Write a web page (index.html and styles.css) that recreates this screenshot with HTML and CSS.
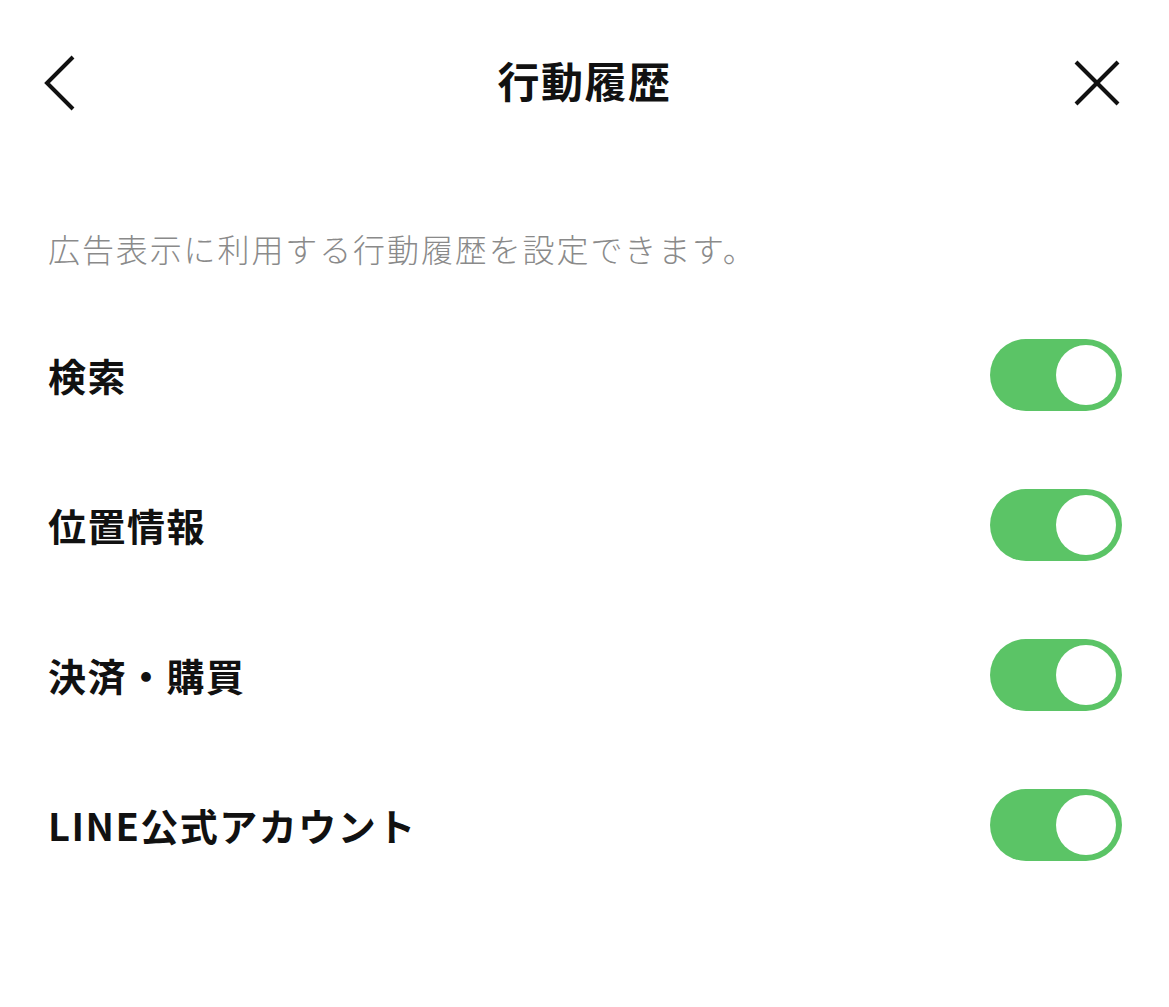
FILE: index.html
```html
<!DOCTYPE html>
<html lang="ja">
<head>
  <meta charset="UTF-8">
  <title>行動履歴</title>
  <link rel="stylesheet" href="styles.css">
</head>
<body>

<div class="screen">
  <div class="header">
    <div class="header-left">
      <svg class="icon-back" width="32" height="56" viewBox="0 0 32 56">
        <polyline points="29,2 3,28 29,54" fill="none" stroke="#111" stroke-width="4" stroke-linecap="butt"/>
      </svg>
    </div>
    <h1 class="title">行動履歴</h1>
    <div class="header-right">
      <svg class="icon-close" width="46" height="46" viewBox="0 0 46 46">
        <line x1="2" y1="2" x2="44" y2="44" stroke="#111" stroke-width="4"/>
        <line x1="44" y1="2" x2="2" y2="44" stroke="#111" stroke-width="4"/>
      </svg>
    </div>
  </div>

  <p class="description">広告表示に利用する行動履歴を設定できます。</p>

  <!-- 設定リスト -->
  <div class="settings">
    <div class="row">
      <span class="label">検索</span>
      <div class="toggle on"><div class="knob"></div></div>
    </div>
    <div class="row">
      <span class="label">位置情報</span>
      <div class="toggle on"><div class="knob"></div></div>
    </div>
    <div class="row">
      <span class="label">決済・購買</span>
      <div class="toggle on"><div class="knob"></div></div>
    </div>
    <div class="row">
      <span class="label">LINE公式アカウント</span>
      <div class="toggle on"><div class="knob"></div></div>
    </div>
  </div>
</div>

</body>
</html>
```

FILE: styles.css
```css
body {
  font-family: 'Noto Sans CJK JP', 'Noto Sans', sans-serif;
  background: #ffffff;
  color: #111111;
  margin: 0;
  padding: 0;
}

.screen {
  width: 1169px;
  min-height: 1007px;
}

.header {
  display: grid;
  grid-template-columns: 1fr auto 1fr;
  align-items: center;
  height: 166px;
  padding: 0 49px 0 44px;
}

.header-left {
  display: flex;
  justify-content: flex-start;
}

.header-right {
  display: flex;
  justify-content: flex-end;
}

.icon-back,
.icon-close {
  display: block;
}

.title {
  margin: 0 0 6px;
  padding-left: 5px;
  font-size: 42px;
  font-weight: bold;
  line-height: 1;
  letter-spacing: 1.5px;
}

.description {
  margin: 58px 0 0;
  padding: 0 48px;
  font-size: 32px;
  font-weight: 300;
  line-height: 48px;
  color: #8a8a8a;
  letter-spacing: 1.9px;
}

.settings {
  margin-top: 28px;
  display: flex;
  flex-direction: column;
}

.row {
  height: 150px;
  display: flex;
  align-items: center;
  justify-content: space-between;
  padding: 0 47px 0 48px;
}

.label {
  font-size: 38px;
  font-weight: bold;
  line-height: 1;
  letter-spacing: 1.5px;
}

.toggle {
  width: 132px;
  height: 72px;
  border-radius: 36px;
  background: #e5e5e5;
  display: flex;
  align-items: center;
  padding: 0 6px;
  box-sizing: border-box;
}

.toggle.on {
  background: #5bc466;
  justify-content: flex-end;
}

.knob {
  width: 60px;
  height: 60px;
  border-radius: 50%;
  background: #ffffff;
}
```
